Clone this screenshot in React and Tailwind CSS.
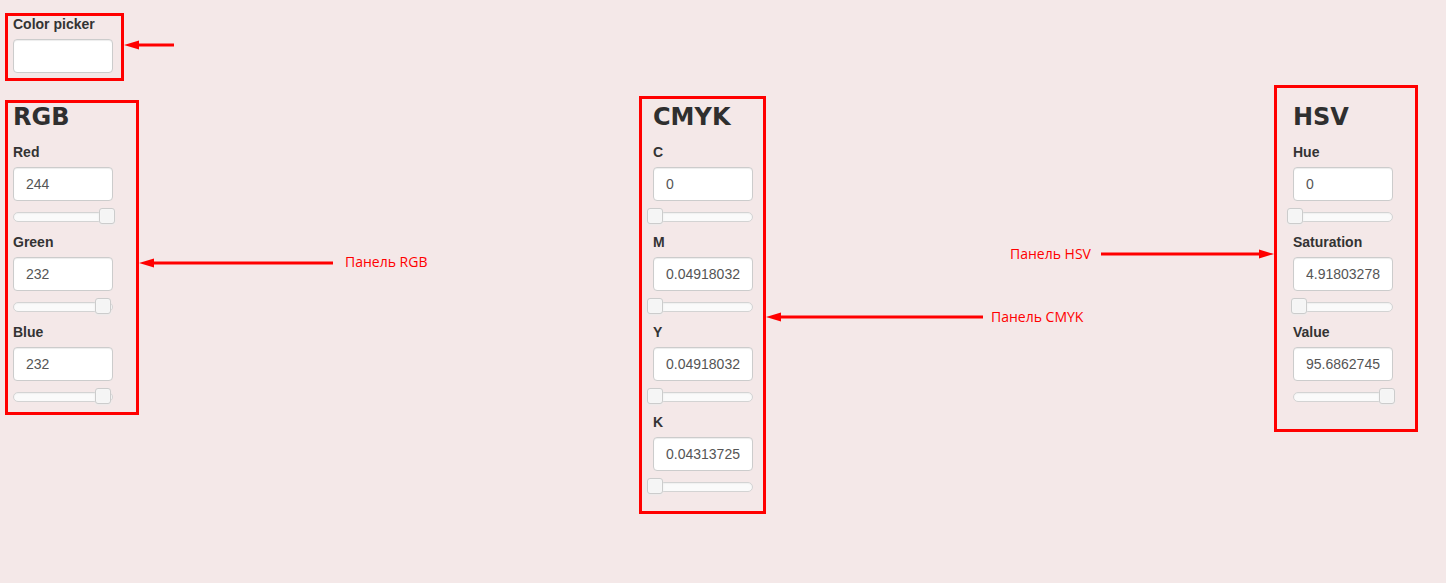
import { useState } from "react";

const panels = [
    {
        title: "RGB",
        fields: [
            { label: "Red", value: "244", frac: 244 / 255 },
            { label: "Green", value: "232", frac: 232 / 255 },
            { label: "Blue", value: "232", frac: 232 / 255 },
        ],
    },
    {
        title: "CMYK",
        fields: [
            { label: "C", value: "0", frac: 0 },
            { label: "M", value: "0.04918032", frac: 0 },
            { label: "Y", value: "0.04918032", frac: 0 },
            { label: "K", value: "0.04313725", frac: 0 },
        ],
    },
    {
        title: "HSV",
        fields: [
            { label: "Hue", value: "0", frac: 0 },
            { label: "Saturation", value: "4.91803278", frac: 0.0491803278 },
            { label: "Value", value: "95.6862745", frac: 0.956862745 },
        ],
    },
];

const inputCls =
    "block w-[100px] h-[34px] px-[12px] bg-white border border-[#cccccc] rounded-[4px] text-[14px] text-[#555555] shadow-[inset_0_1px_1px_rgba(0,0,0,0.075)] outline-none";

const labelCls =
    "block h-[18px] leading-[18px] text-[14px] font-bold text-[#333333]";

function Slider({ frac }) {
    return (
        <div className="relative mt-[11px] w-[100px] h-[10px] bg-[#fafafa] border border-[#d3d3d3] rounded-[5px] shadow-[inset_0_1px_1px_#f0f0f0]">
            <div
                className="absolute top-[-5px] w-[16px] h-[16px] bg-[#f5f5f5] border border-[#cccccc] rounded-[3px] shadow-[inset_0_0_1px_#fff,0_1px_2px_#ebebeb]"
                style={{ left: frac * 97 - 7.5 }}
            />
        </div>
    );
}

function Field({ label, value, frac }) {
    return (
        <div className="mb-[11px]">
            <label className={`${labelCls} mb-[6px]`}>{label}</label>
            <input readOnly value={value} className={inputCls} />
            <Slider frac={frac} />
        </div>
    );
}

function Panel({ title, fields }) {
    return (
        <div>
            <h3 className="h-[26px] leading-[26px] mb-[13px] text-[24px] font-bold text-[#2f2f2f] font-['DejaVu_Sans',sans-serif]">
                {title}
            </h3>
            {fields.map((f) => (
                <Field key={f.label} {...f} />
            ))}
        </div>
    );
}

function Arrow({ x1, x2, y }) {
    // arrowhead sits at x2
    const dir = x2 < x1 ? 1 : -1;
    const head = 15;
    return (
        <>
            <line x1={x1} y1={y} x2={x2 + dir * 8} y2={y} stroke="#ff0000" strokeWidth="3" />
            <polygon
                points={`${x2},${y} ${x2 + dir * head},${y - 4.5} ${x2 + dir * head},${y + 4.5}`}
                fill="#ff0000"
            />
        </>
    );
}

function Note({ left, top, children }) {
    return (
        <div
            className="absolute text-[14px] leading-[16px] text-[#ff0000] font-['Open_Sans',sans-serif] whitespace-nowrap"
            style={{ left, top }}
        >
            {children}
        </div>
    );
}

export default function App() {
    const [color] = useState("");

    return (
        <div className="relative h-[583px] overflow-hidden bg-[#f4e8e8] font-['Liberation_Sans',Arial,sans-serif]">
            <div className="pl-[13px] pt-[15px]">
                {/* Color picker */}
                <label className={`${labelCls} mb-[6px]`}>Color picker</label>
                <input readOnly value={color} className={inputCls} />

                {/* Panels */}
                <div className="grid grid-cols-[640px_640px_1fr] mt-[31px]">
                    {panels.map((p) => (
                        <Panel key={p.title} {...p} />
                    ))}
                </div>
            </div>

            {/* Annotation boxes */}
            <div className="absolute left-[5px] top-[13px] w-[119px] h-[68px] border-[3px] border-[#ff0000] pointer-events-none" />
            <div className="absolute left-[5px] top-[100px] w-[134px] h-[315px] border-[3px] border-[#ff0000] pointer-events-none" />
            <div className="absolute left-[639px] top-[96px] w-[127px] h-[418px] border-[3px] border-[#ff0000] pointer-events-none" />
            <div className="absolute left-[1274px] top-[85px] w-[144px] h-[347px] border-[3px] border-[#ff0000] pointer-events-none" />

            {/* Annotation arrows */}
            <svg className="absolute inset-0 pointer-events-none" width="1446" height="583">
                <Arrow x1={174} x2={124} y={45} />
                <Arrow x1={333} x2={139} y={263} />
                <Arrow x1={983} x2={766} y={317} />
                <Arrow x1={1101} x2={1274} y={254} />
            </svg>

            <Note left={345} top={254}>Панель RGB</Note>
            <Note left={991} top={309}>Панель CMYK</Note>
            <Note left={1010} top={246}>Панель HSV</Note>
        </div>
    );
}
